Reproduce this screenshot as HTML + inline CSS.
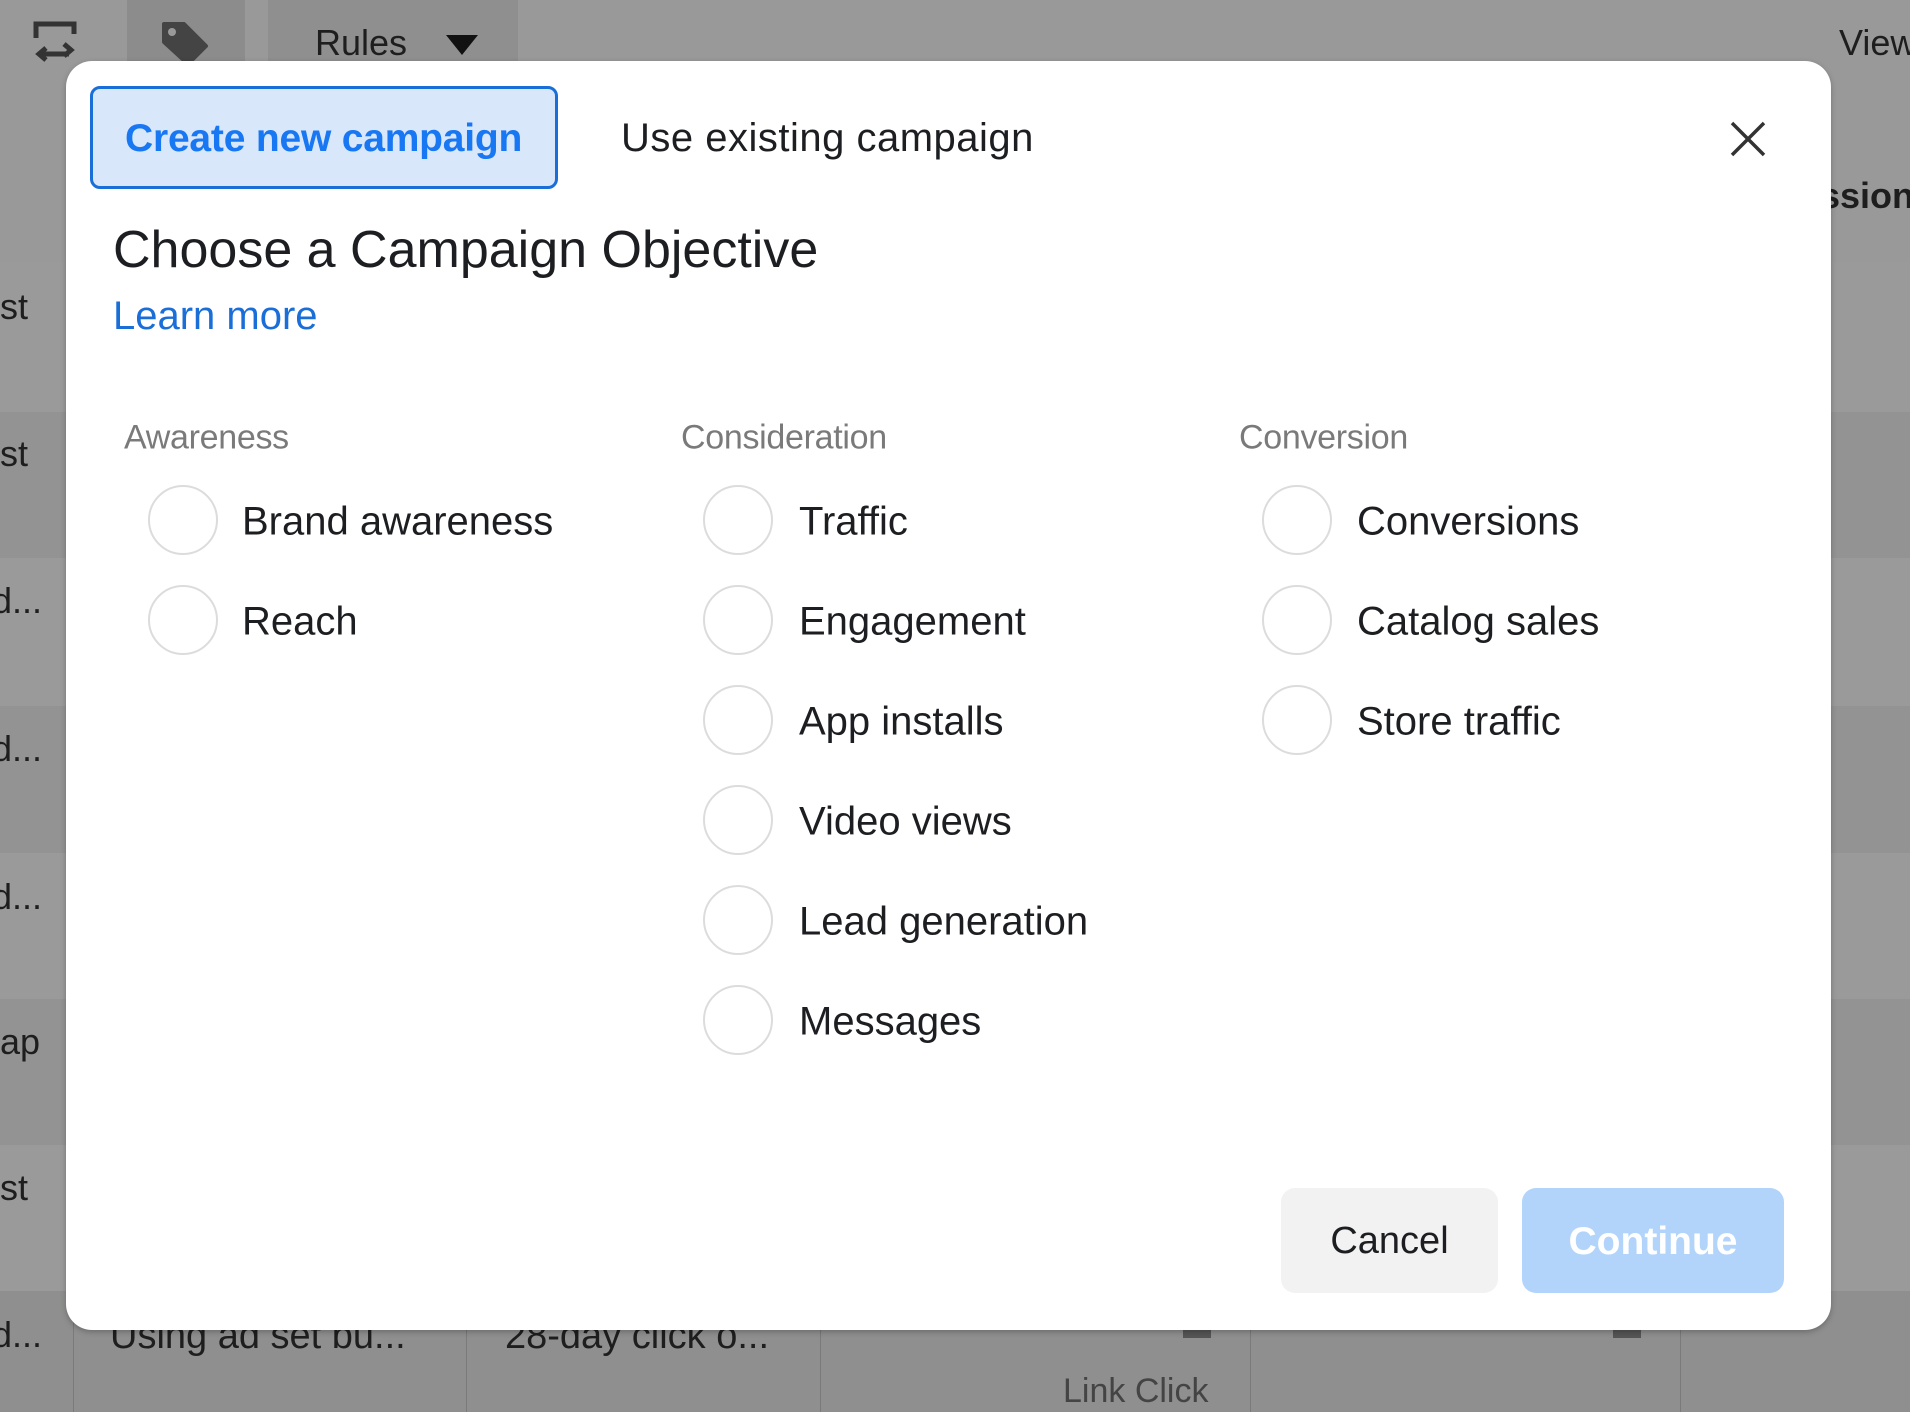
<!DOCTYPE html>
<html><head><meta charset="utf-8"><style>
*{margin:0;padding:0;box-sizing:border-box}
body{width:1910px;height:1412px;overflow:hidden;background:#959595;font-family:"Liberation Sans",sans-serif;position:relative}
.a{position:absolute;white-space:nowrap}
.band{position:absolute;left:0;width:1910px}
.bg{color:#1e1e1e;font-size:36px}
.modal{position:absolute;left:66px;top:61px;width:1765px;height:1269px;background:#fff;border-radius:26px;box-shadow:0 2px 6px rgba(0,0,0,.25)}
.lbl{position:absolute;font-size:34px;color:#7a7a7a;transform:translateY(-50%);letter-spacing:-0.3px}
.r{position:absolute;width:70px;height:70px;border:2.5px solid #dcdcdc;border-radius:50%;transform:translate(-50%,-50%)}
.t{position:absolute;font-size:40px;color:#1c1e21;transform:translateY(-50%);white-space:nowrap}
</style></head><body>
<div class="band" style="top:0;height:61px;background:#999"></div>
<div class="band" style="top:61px;height:201px;background:#999"></div>
<div class="band" style="top:262px;height:150px;background:#9a9a9a"></div>
<div class="band" style="top:412px;height:146px;background:#939393"></div>
<div class="band" style="top:558px;height:148px;background:#9a9a9a"></div>
<div class="band" style="top:706px;height:147px;background:#939393"></div>
<div class="band" style="top:853px;height:146px;background:#9a9a9a"></div>
<div class="band" style="top:999px;height:146px;background:#939393"></div>
<div class="band" style="top:1145px;height:146px;background:#9a9a9a"></div>
<div class="band" style="top:1291px;height:121px;background:#8e8f8e"></div>
<div class="a" style="left:127px;top:0;width:118px;height:61px;background:#8c8c8c"></div>
<div class="a" style="left:268px;top:0;width:250px;height:61px;background:#8f8f8f"></div>
<svg class="a" style="left:30px;top:18px" width="52" height="48" viewBox="0 0 52 48"><path d="M6 20V6h38v10" fill="none" stroke="#333" stroke-width="5"/><path d="M16 30l-7 6 7 6M9 36h30M34 26l7 6-7 6" fill="none" stroke="#333" stroke-width="5"/></svg>
<svg class="a" style="left:160px;top:20px" width="52" height="45" viewBox="0 0 52 45"><path d="M4 4h20l22 22-18 18L4 22z" fill="#444" stroke="#444" stroke-width="4" stroke-linejoin="round"/><circle cx="12" cy="12" r="4" fill="#999"/></svg>
<div class="a bg" style="left:315px;top:22px">Rules</div>
<svg class="a" style="left:446px;top:35px" width="32" height="20"><path d="M0 0h32L16 20z" fill="#111"/></svg>
<div class="a bg" style="left:1839px;top:22px">View</div>
<div class="a bg" style="left:1820px;top:175px;font-weight:bold">ssion</div>
<div class="a bg" style="left:0;top:286px">st</div>
<div class="a bg" style="left:0;top:433px">st</div>
<div class="a bg" style="left:-8px;top:580px">d...</div>
<div class="a bg" style="left:-8px;top:728px">d...</div>
<div class="a bg" style="left:-8px;top:876px">d...</div>
<div class="a bg" style="left:0;top:1021px">ap</div>
<div class="a bg" style="left:0;top:1167px">st</div>
<div class="a bg" style="left:-8px;top:1314px">d...</div>
<div class="a" style="left:73px;top:1291px;width:1px;height:121px;background:#7a7a7a"></div>
<div class="a" style="left:466px;top:1291px;width:1px;height:121px;background:#7a7a7a"></div>
<div class="a" style="left:820px;top:1291px;width:1px;height:121px;background:#7a7a7a"></div>
<div class="a" style="left:1250px;top:1291px;width:1px;height:121px;background:#7a7a7a"></div>
<div class="a" style="left:1680px;top:1291px;width:1px;height:121px;background:#7a7a7a"></div>
<div class="a bg" style="left:110px;top:1315px;font-size:38px">Using ad set bu...</div>
<div class="a bg" style="left:505px;top:1315px;font-size:38px">28-day click o...</div>
<div class="a bg" style="left:1063px;top:1372px;font-size:34px;color:#444">Link Click</div>
<div class="a" style="left:1183px;top:1330px;width:28px;height:8px;background:#555"></div>
<div class="a" style="left:1613px;top:1330px;width:28px;height:8px;background:#555"></div>

<div class="modal">
<div class="a" style="left:24px;top:25px;width:468px;height:103px;border:3.5px solid #1a6ed8;border-radius:10px;background:#d9e7fb"></div>
<div class="a" style="left:59px;top:56px;font-size:39px;font-weight:bold;color:#1877f2;letter-spacing:-0.2px">Create new campaign</div>
<div class="a" style="left:555px;top:55px;font-size:40px;color:#1c1e21;letter-spacing:0.5px">Use existing campaign</div>
<svg class="a" style="left:1664px;top:60px" width="36" height="36"><path d="M2 2L34 34M34 2L2 34" stroke="#333" stroke-width="3.5"/></svg>
<div class="a" style="left:47px;top:159px;font-size:52px;color:#1c1e21">Choose a Campaign Objective</div>
<div class="a" style="left:47px;top:233px;font-size:40px;color:#1a6ed8">Learn more</div>
<div class="lbl" style="left:58px;top:377px">Awareness</div>
<div class="lbl" style="left:615px;top:377px">Consideration</div>
<div class="lbl" style="left:1173px;top:377px">Conversion</div>

<div class="r" style="left:117px;top:459px"></div><div class="t" style="left:176px;top:461px">Brand awareness</div>
<div class="r" style="left:117px;top:559px"></div><div class="t" style="left:176px;top:561px">Reach</div>

<div class="r" style="left:672px;top:459px"></div><div class="t" style="left:733px;top:461px">Traffic</div>
<div class="r" style="left:672px;top:559px"></div><div class="t" style="left:733px;top:561px">Engagement</div>
<div class="r" style="left:672px;top:659px"></div><div class="t" style="left:733px;top:661px">App installs</div>
<div class="r" style="left:672px;top:759px"></div><div class="t" style="left:733px;top:761px">Video views</div>
<div class="r" style="left:672px;top:859px"></div><div class="t" style="left:733px;top:861px">Lead generation</div>
<div class="r" style="left:672px;top:959px"></div><div class="t" style="left:733px;top:961px">Messages</div>

<div class="r" style="left:1231px;top:459px"></div><div class="t" style="left:1291px;top:461px">Conversions</div>
<div class="r" style="left:1231px;top:559px"></div><div class="t" style="left:1291px;top:561px">Catalog sales</div>
<div class="r" style="left:1231px;top:659px"></div><div class="t" style="left:1291px;top:661px">Store traffic</div>

<div class="a" style="left:1215px;top:1127px;width:217px;height:105px;background:#f2f2f2;border-radius:14px;font-size:38px;color:#1c1e21;text-align:center;line-height:107px">Cancel</div>
<div class="a" style="left:1456px;top:1127px;width:262px;height:105px;background:#b2d4fb;border-radius:14px;font-size:39px;font-weight:bold;color:#fff;text-align:center;line-height:107px">Continue</div>
</div>
</body></html>
